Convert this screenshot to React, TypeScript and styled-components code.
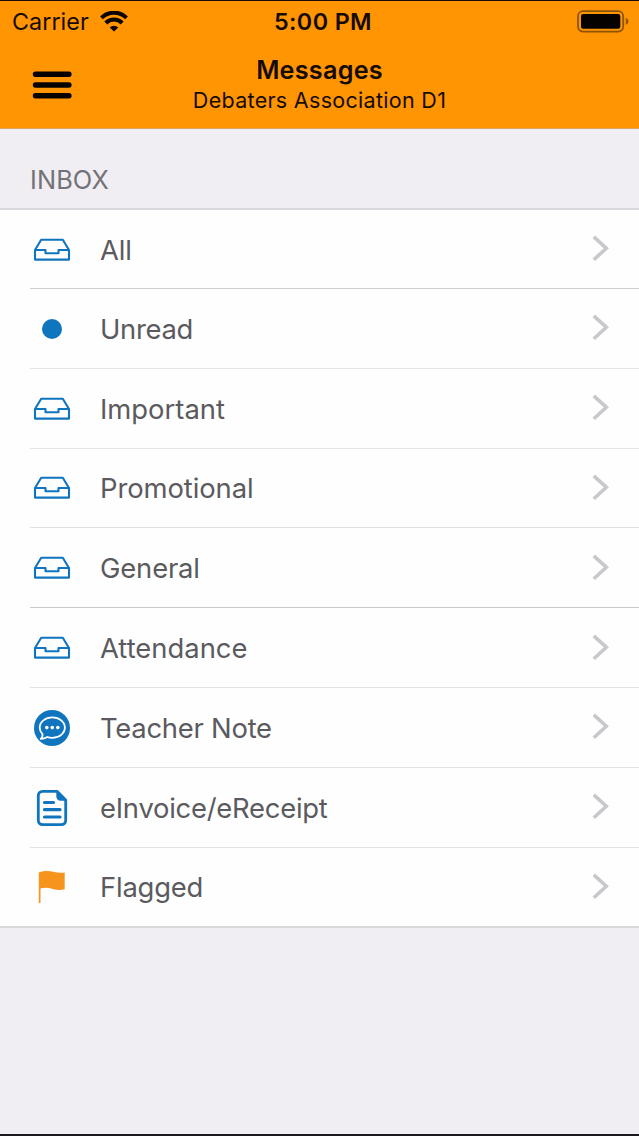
import React from 'react';
import styled, { createGlobalStyle } from 'styled-components';

const GlobalStyle = createGlobalStyle`
  * { box-sizing: border-box; }
  body {
    margin: 0;
    background: #efeef2;
    font-family: Inter, 'Liberation Sans', sans-serif;
  }
`;

const Screen = styled.div`
  display: flex;
  flex-direction: column;
  height: 1136px;
  overflow: hidden;
  background: #f0eef2;
  border-top: 1px solid #1c0a0a;
  border-bottom: 2px solid #19191b;
`;

const Header = styled.header`
  height: 128px;
  flex: none;
  background: #ff9502;
  border-bottom: 1px solid #d9a45e;
  color: #160b02;
`;

const StatusBar = styled.div`
  display: grid;
  grid-template-columns: 1fr auto 1fr;
  align-items: center;
  height: 42px;
  padding: 0 10px 0 12px;
`;

const CarrierGroup = styled.div`
  display: flex;
  align-items: center;
  gap: 11px;
`;

const Carrier = styled.span`
  font-size: 23.3px;
  line-height: 28px;
  letter-spacing: 0.05px;
`;

const Clock = styled.span`
  padding-left: 5px;
  font-size: 23.3px;
  line-height: 28px;
  font-weight: 600;
  letter-spacing: 0.4px;
`;

const BatteryGroup = styled.div`
  display: flex;
  justify-content: flex-end;
`;

const NavBar = styled.div`
  display: grid;
  grid-template-columns: 72px 1fr 72px;
  height: 85px;
`;

const MenuButton = styled.button`
  display: flex;
  align-items: flex-start;
  padding: 27px 0 0 32px;
  border: 0;
  background: none;
`;

const Titles = styled.div`
  display: flex;
  flex-direction: column;
  align-items: center;
  padding-top: 11px;
`;

const Title = styled.h1`
  margin: 0;
  font-size: 25.2px;
  line-height: 32px;
  font-weight: 600;
  letter-spacing: 0.25px;
`;

const Subtitle = styled.div`
  font-size: 21.5px;
  line-height: 28px;
  letter-spacing: 0.3px;
`;

const SectionTitle = styled.h2`
  display: flex;
  align-items: flex-end;
  flex: none;
  height: 81px;
  margin: 0;
  padding: 0 0 12px 30px;
  border-bottom: 2px solid #d8d7dc;
  font-size: 25.4px;
  line-height: 32px;
  font-weight: 400;
  letter-spacing: 0.1px;
  color: #737277;
`;

const List = styled.ul`
  flex: none;
  margin: 0;
  padding: 0;
  list-style: none;
  background: #fefefe;
  border-bottom: 2px solid #d8d7da;
`;

const Row = styled.li`
  display: flex;
  height: 79.8px;
  padding-left: 30px;
  &:first-child { height: 79px; }
  &:last-child { height: 78.4px; }
`;

const RowBody = styled.div<{ $line?: string }>`
  display: flex;
  flex: 1;
  align-items: center;
  padding-top: 1px;
  padding-right: 30px;
  border-bottom: ${(p) => (p.$line ? `1px solid ${p.$line}` : '0')};
`;

const IconSlot = styled.span`
  display: flex;
  justify-content: center;
  width: 44px;
  margin-right: 26px;
`;

const Label = styled.span<{ $spacing: number }>`
  flex: 1;
  font-size: 27.4px;
  line-height: 36px;
  letter-spacing: ${(p) => p.$spacing}px;
  color: #5b5a5f;
`;

const BLUE = '#1075bf';

const Tray = () => (
  <svg width="38" height="24" viewBox="0 0 38 24" fill="none" stroke={BLUE} strokeWidth="2.1" strokeLinejoin="round">
    <path d="M2 12 8.2 1.8h21.600L36 12v9.600H2z" />
    <path d="M2 12h10.500v3.300h13V12H36" />
  </svg>
);

const Dot = () => (
  <svg width="22" height="22" viewBox="0 0 22 22">
    <circle cx="11" cy="11" r="10" fill={BLUE} />
  </svg>
);

const Chat = () => (
  <svg width="38" height="38" viewBox="0 0 38 38">
    <circle cx="19" cy="19" r="18" fill={BLUE} />
    <path
      d="M19.3 8.4c7 0 12.600 4.500 12.600 10.200s-5.600 10.200-12.600 10.200c-1.800 0-3.500-.3-5-.8-2 1.300-4.200 1.900-6.500 1.900 1.200-1.300 1.800-2.900 1.800-4.500-1.800-1.800-2.900-4.200-2.900-6.800 0-5.700 5.600-10.200 12.600-10.200z"
      fill="none" stroke="#fff" strokeWidth="1.8" strokeLinejoin="round"
    />
    <g fill="#fff">
      <circle cx="13.8" cy="18.600" r="1.8" />
      <circle cx="19.3" cy="18.600" r="1.8" />
      <circle cx="24.8" cy="18.600" r="1.8" />
    </g>
  </svg>
);

const Invoice = () => (
  <svg width="32" height="38" viewBox="0 0 32 38" fill="none" stroke={BLUE} strokeLinecap="round" strokeLinejoin="round">
    <path d="M21 2.3H6.5A4.2 4.2 0 0 0 2.3 6.5v25a4.2 4.2 0 0 0 4.2 4.2h19a4.2 4.2 0 0 0 4.2-4.2V11z" strokeWidth="2.8" />
    <path d="M21 2.3V7.5a3.5 3.5 0 0 0 3.5 3.5h5.2z" fill={BLUE} strokeWidth="1.4" />
    <path d="M8.5 13.5h9M8.5 20.7h15.5M8.5 28h15.5" strokeWidth="3.2" />
  </svg>
);

const Flag = () => (
  <svg width="28" height="34" viewBox="0 0 28 34" fill="#f7941d">
    <path d="M.8 2.5C6 .6 11 .6 15 1.7c4 .9 8 1.300 11.700.7v16.900c-4 1.200-8 .8-12-.4-4-1.200-8.500-1.500-12.200-.3V33H.8z" />
  </svg>
);

const ChevronIcon = styled.svg`
  margin-bottom: 2px;
`;

const Chevron = () => (
  <ChevronIcon width="18" height="27" viewBox="0 0 18 27" fill="none" stroke="#c8c7cc" strokeWidth="3.6">
    <path d="M2.8 1.8 15.300 13.200 2.800 24.700" />
  </ChevronIcon>
);

const WifiIcon = styled.svg`
  margin-bottom: 1px;
`;

const Wifi = () => (
  <WifiIcon width="28" height="21" viewBox="0 0 28 21" fill="none" stroke="#0c0500" strokeWidth="4">
    <path d="M1.500 6.800a17.800 17.800 0 0 1 25 0" />
    <path d="M5.800 12a11.400 11.400 0 0 1 16.400 0" />
    <path d="M14 20.500 9.700 16.400a6.200 6.200 0 0 1 8.600 0z" fill="#0c0500" stroke="none" />
  </WifiIcon>
);

const Battery = () => (
  <svg width="52" height="24" viewBox="0 0 52 24">
    <rect x="1" y="1.2" width="45.2" height="20.4" rx="5" fill="none" stroke="#8c5407" strokeWidth="1.8" />
    <rect x="4" y="4" width="39.3" height="14.8" rx="2.2" fill="#050200" />
    <path d="M48.800 8c1.700.6 2.600 1.800 2.600 3.400s-.9 2.800-2.600 3.400z" fill="#8c5407" />
  </svg>
);

const Menu = () => (
  <svg width="40" height="30" viewBox="0 0 40 30" stroke="#060200" strokeWidth="5.4" strokeLinecap="round">
    <path d="M3.500 4.200h33.400M3.500 15h33.400M3.500 25.800h33.400" />
  </svg>
);

const items = [
  { label: 'All', icon: <Tray />, spacing: -0.15, line: '#cfcdd2' },
  { label: 'Unread', icon: <Dot />, spacing: -0.3, line: '#e4e3e8' },
  { label: 'Important', icon: <Tray />, spacing: 0, line: '#e4e3e8' },
  { label: 'Promotional', icon: <Tray />, spacing: -0.08, line: '#e0e0e3' },
  { label: 'General', icon: <Tray />, spacing: -0.15, line: '#c9c8cc' },
  { label: 'Attendance', icon: <Tray />, spacing: 0, line: '#e0e2e4' },
  { label: 'Teacher Note', icon: <Chat />, spacing: -0.24, line: '#e0e2e4' },
  { label: 'eInvoice/eReceipt', icon: <Invoice />, spacing: -0.24, line: '#e2e2e5' },
  { label: 'Flagged', icon: <Flag />, spacing: -0.2, line: undefined },
];

export default function App() {
  return (
    <Screen>
      <GlobalStyle />
      <Header>
        <StatusBar>
          <CarrierGroup>
            <Carrier>Carrier</Carrier>
            <Wifi />
          </CarrierGroup>
          <Clock>5:00 PM</Clock>
          <BatteryGroup>
            <Battery />
          </BatteryGroup>
        </StatusBar>
        <NavBar>
          <MenuButton aria-label="Menu">
            <Menu />
          </MenuButton>
          <Titles>
            <Title>Messages</Title>
            <Subtitle>Debaters Association D1</Subtitle>
          </Titles>
        </NavBar>
      </Header>
      <SectionTitle>INBOX</SectionTitle>
      <List>
        {items.map((item) => (
          <Row key={item.label}>
            <RowBody $line={item.line}>
              <IconSlot>{item.icon}</IconSlot>
              <Label $spacing={item.spacing}>{item.label}</Label>
              <Chevron />
            </RowBody>
          </Row>
        ))}
      </List>
    </Screen>
  );
}
